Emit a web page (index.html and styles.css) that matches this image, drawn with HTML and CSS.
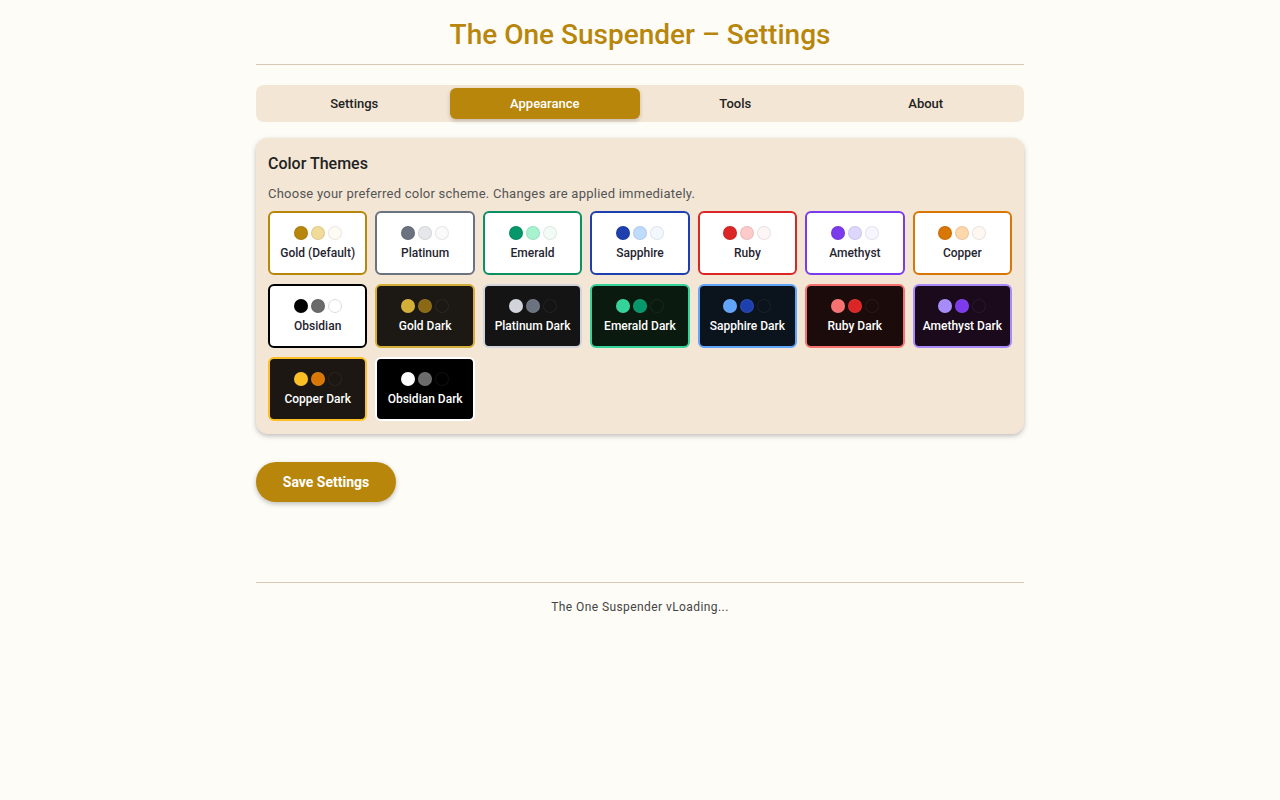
FILE: index.html
```html
<!DOCTYPE html>
<html lang="en">
<head>
<meta charset="utf-8">
<title>The One Suspender – Settings</title>
<link rel="stylesheet" href="styles.css">
</head>
<body>
<div class="container">
  <header class="header">
    <h1 class="title">The One Suspender – Settings</h1>
  </header>

  <nav class="tabs">
    <button class="tab">Settings</button>
    <button class="tab active">Appearance</button>
    <button class="tab">Tools</button>
    <button class="tab">About</button>
  </nav>

  <section class="card">
    <h2 class="card-title">Color Themes</h2>
    <p class="card-desc">Choose your preferred color scheme. Changes are applied immediately.</p>
    <div class="theme-grid">
      <div class="theme t-gold"><div class="dots"><span class="dot d1"></span><span class="dot d2"></span><span class="dot d3"></span></div><div class="name">Gold (Default)</div></div>
      <div class="theme t-platinum"><div class="dots"><span class="dot d1"></span><span class="dot d2"></span><span class="dot d3"></span></div><div class="name">Platinum</div></div>
      <div class="theme t-emerald"><div class="dots"><span class="dot d1"></span><span class="dot d2"></span><span class="dot d3"></span></div><div class="name">Emerald</div></div>
      <div class="theme t-sapphire"><div class="dots"><span class="dot d1"></span><span class="dot d2"></span><span class="dot d3"></span></div><div class="name">Sapphire</div></div>
      <div class="theme t-ruby"><div class="dots"><span class="dot d1"></span><span class="dot d2"></span><span class="dot d3"></span></div><div class="name">Ruby</div></div>
      <div class="theme t-amethyst"><div class="dots"><span class="dot d1"></span><span class="dot d2"></span><span class="dot d3"></span></div><div class="name">Amethyst</div></div>
      <div class="theme t-copper"><div class="dots"><span class="dot d1"></span><span class="dot d2"></span><span class="dot d3"></span></div><div class="name">Copper</div></div>
      <div class="theme t-obsidian"><div class="dots"><span class="dot d1"></span><span class="dot d2"></span><span class="dot d3"></span></div><div class="name">Obsidian</div></div>
      <div class="theme dark t-gold-dark"><div class="dots"><span class="dot d1"></span><span class="dot d2"></span><span class="dot d3"></span></div><div class="name">Gold Dark</div></div>
      <div class="theme dark t-platinum-dark"><div class="dots"><span class="dot d1"></span><span class="dot d2"></span><span class="dot d3"></span></div><div class="name">Platinum Dark</div></div>
      <div class="theme dark t-emerald-dark"><div class="dots"><span class="dot d1"></span><span class="dot d2"></span><span class="dot d3"></span></div><div class="name">Emerald Dark</div></div>
      <div class="theme dark t-sapphire-dark"><div class="dots"><span class="dot d1"></span><span class="dot d2"></span><span class="dot d3"></span></div><div class="name">Sapphire Dark</div></div>
      <div class="theme dark t-ruby-dark"><div class="dots"><span class="dot d1"></span><span class="dot d2"></span><span class="dot d3"></span></div><div class="name">Ruby Dark</div></div>
      <div class="theme dark t-amethyst-dark"><div class="dots"><span class="dot d1"></span><span class="dot d2"></span><span class="dot d3"></span></div><div class="name">Amethyst Dark</div></div>
      <div class="theme dark t-copper-dark"><div class="dots"><span class="dot d1"></span><span class="dot d2"></span><span class="dot d3"></span></div><div class="name">Copper Dark</div></div>
      <div class="theme dark t-obsidian-dark"><div class="dots"><span class="dot d1"></span><span class="dot d2"></span><span class="dot d3"></span></div><div class="name">Obsidian Dark</div></div>
    </div>
  </section>

  <div class="actions">
    <button class="save-btn">Save Settings</button>
  </div>

  <footer class="footer">The One Suspender vLoading...</footer>
</div>
</body>
</html>
```

FILE: styles.css
```css
* { box-sizing: border-box; }

body {
  margin: 0;
  background: #fefcf7;
  font-family: Roboto, "Liberation Sans", Arial, sans-serif;
  color: #222;
}

.container {
  width: 768px;
  margin: 0 auto;
}

.header {
  padding: 18px 0 12px;
  border-bottom: 1px solid #d8c8b4;
  text-align: center;
}

.title {
  margin: 0;
  font-size: 28px;
  line-height: 34px;
  font-weight: 500;
  color: #b8860b;
}

.tabs {
  margin-top: 20px;
  display: flex;
  padding: 3px;
  background: #f3e6d5;
  border-radius: 8px;
}

.tab {
  flex: 1;
  height: 31px;
  border: none;
  background: transparent;
  border-radius: 6px;
  font-family: inherit;
  font-size: 13px;
  font-weight: 500;
  color: #222;
  cursor: pointer;
}

.tab.active {
  background: #b8860b;
  color: #fff;
  box-shadow: 0 2px 4px rgba(0, 0, 0, 0.2);
}

.card {
  margin-top: 16px;
  background: #f3e6d5;
  border-radius: 12px;
  padding: 16px 12px 13px;
  box-shadow: 0 2px 5px rgba(0, 0, 0, 0.25);
}

.card-title {
  margin: 0;
  font-size: 16px;
  line-height: 19px;
  font-weight: 500;
  color: #222;
}

.card-desc {
  margin: 13px 0 9px;
  font-size: 13px;
  line-height: 16px;
  letter-spacing: 0.24px;
  color: #555;
}

.theme-grid {
  display: grid;
  grid-template-columns: repeat(7, 1fr);
  gap: 9px 8px;
}

.theme {
  height: 64px;
  border: 2px solid #b8860b;
  border-radius: 6px;
  background: #fff;
  display: flex;
  flex-direction: column;
  align-items: center;
  padding-top: 13px;
  cursor: pointer;
}

.dots {
  display: flex;
  gap: 3px;
  height: 14px;
}

.dot {
  width: 14px;
  height: 14px;
  border-radius: 50%;
  border: 1px solid rgba(0, 0, 0, 0.08);
}

.name {
  margin-top: 5px;
  font-size: 12px;
  line-height: 16px;
  font-weight: 500;
  color: #1f2430;
  white-space: nowrap;
}

.theme.dark .name { color: #fff; }
.theme.dark .dot { border-color: rgba(255, 255, 255, 0.06); }

.t-gold { border-color: #b8860b; }
.t-gold .d1 { background: #b8860b; }
.t-gold .d2 { background: #f0dc98; }
.t-gold .d3 { background: #fdfbf4; }

.t-platinum { border-color: #6b7280; }
.t-platinum .d1 { background: #6b7280; }
.t-platinum .d2 { background: #e5e7eb; }
.t-platinum .d3 { background: #fafafa; }

.t-emerald { border-color: #0e8f62; }
.t-emerald .d1 { background: #059669; }
.t-emerald .d2 { background: #a7f3d0; }
.t-emerald .d3 { background: #f2fbf5; }

.t-sapphire { border-color: #1e40af; }
.t-sapphire .d1 { background: #1e40af; }
.t-sapphire .d2 { background: #bfdbfe; }
.t-sapphire .d3 { background: #f3f8ff; }

.t-ruby { border-color: #dc2626; }
.t-ruby .d1 { background: #dc2626; }
.t-ruby .d2 { background: #fecaca; }
.t-ruby .d3 { background: #fef6f6; }

.t-amethyst { border-color: #7c3aed; }
.t-amethyst .d1 { background: #7c3aed; }
.t-amethyst .d2 { background: #ddd6fe; }
.t-amethyst .d3 { background: #f7f5ff; }

.t-copper { border-color: #d97706; }
.t-copper .d1 { background: #d97706; }
.t-copper .d2 { background: #fed7aa; }
.t-copper .d3 { background: #fff8f2; }

.t-obsidian { border-color: #000; }
.t-obsidian .d1 { background: #000; }
.t-obsidian .d2 { background: #6b6b6b; }
.t-obsidian .d3 { background: #fff; border-color: #ddd; }

.t-gold-dark { background: #1c1813; border-color: #d4af37; }
.t-gold-dark .d1 { background: #d4af37; }
.t-gold-dark .d2 { background: #8b6914; }
.t-gold-dark .d3 { background: #1c1813; }

.t-platinum-dark { background: #141414; border-color: #d1d5db; }
.t-platinum-dark .d1 { background: #d1d5db; }
.t-platinum-dark .d2 { background: #6b7280; }
.t-platinum-dark .d3 { background: #141414; }

.t-emerald-dark { background: #0a1a0e; border-color: #34d399; }
.t-emerald-dark .d1 { background: #34d399; }
.t-emerald-dark .d2 { background: #059669; }
.t-emerald-dark .d3 { background: #0a1a0e; }

.t-sapphire-dark { background: #0b131c; border-color: #60a5fa; }
.t-sapphire-dark .d1 { background: #60a5fa; }
.t-sapphire-dark .d2 { background: #1e40af; }
.t-sapphire-dark .d3 { background: #0b131c; }

.t-ruby-dark { background: #1c0b0b; border-color: #f87171; }
.t-ruby-dark .d1 { background: #f87171; }
.t-ruby-dark .d2 { background: #dc2626; }
.t-ruby-dark .d3 { background: #1c0b0b; }

.t-amethyst-dark { background: #1a0a1c; border-color: #a78bfa; }
.t-amethyst-dark .d1 { background: #a78bfa; }
.t-amethyst-dark .d2 { background: #7c3aed; }
.t-amethyst-dark .d3 { background: #1a0a1c; }

.t-copper-dark { background: #1c1713; border-color: #fbbf24; }
.t-copper-dark .d1 { background: #fbbf24; }
.t-copper-dark .d2 { background: #d97706; }
.t-copper-dark .d3 { background: #1c1713; }

.t-obsidian-dark { background: #000; border-color: #fff; }
.t-obsidian-dark .d1 { background: #fff; }
.t-obsidian-dark .d2 { background: #6b6b6b; }
.t-obsidian-dark .d3 { background: #000; border-color: #000; }

.actions {
  margin-top: 28px;
}

.save-btn {
  width: 140px;
  height: 40px;
  border: none;
  border-radius: 20px;
  background: #b8860b;
  color: #fff;
  font-family: inherit;
  font-size: 14px;
  font-weight: 700;
  box-shadow: 0 2px 5px rgba(0, 0, 0, 0.25);
  cursor: pointer;
}

.footer {
  margin-top: 80px;
  border-top: 1px solid #d8c8b4;
  padding-top: 17px;
  text-align: center;
  font-size: 12px;
  line-height: 14px;
  letter-spacing: 0.42px;
  color: #444;
}
```
